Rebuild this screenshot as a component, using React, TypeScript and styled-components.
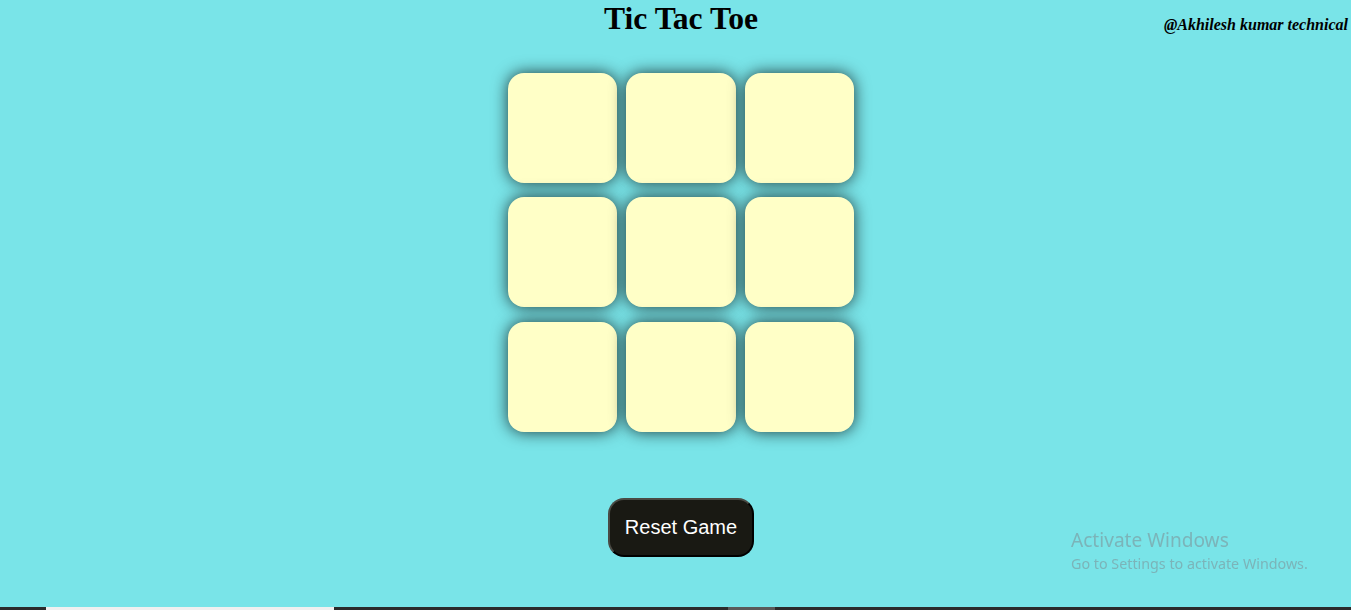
import React from "react";
import styled, { createGlobalStyle } from "styled-components";

const Global = createGlobalStyle`
  html, body { margin: 0; padding: 0; }
  body {
    background: #79e4e8;
    font-family: "Liberation Serif", "Times New Roman", serif;
    overflow: hidden;
  }
`;

const Page = styled.main`
  min-height: 100vh;
  box-sizing: border-box;
  display: flex;
  flex-direction: column;
  align-items: center;
  padding-left: 11px;
`;

const Header = styled.header`
  width: 100%;
  display: grid;
  grid-template-columns: 1fr auto 1fr;
  align-items: baseline;
  padding-top: 1px;
`;

const Title = styled.h1`
  grid-column: 2;
  margin: 0;
  font-size: 31.6px;
  font-weight: 700;
  color: #000;
`;

const Author = styled.p`
  grid-column: 3;
  justify-self: end;
  margin: 0 3px 0 0;
  position: relative;
  top: 1px;
  font-size: 16px;
  font-weight: 700;
  font-style: italic;
  color: #000;
`;

const Board = styled.div`
  margin-top: 36px;
  display: grid;
  grid-template-columns: repeat(3, 109.8px);
  grid-auto-rows: 109.8px;
  gap: 14.6px 8.8px;
`;

const Cell = styled.button`
  width: 109.8px;
  height: 109.8px;
  border: none;
  border-radius: 16px;
  background: #ffffc7;
  box-shadow: 0 0 1rem rgba(0, 0, 0, 0.75);
  cursor: pointer;
  padding: 0;
`;

const ResetButton = styled.button`
  margin-top: 66px;
  padding: 16px 15px;
  font-family: "Liberation Sans", Arial, sans-serif;
  font-size: 20px;
  color: #fff;
  background: #191913;
  border: 2px outset #4a4a44;
  border-right-color: #050503;
  border-bottom-color: #050503;
  border-radius: 16px;
  cursor: pointer;
`;

const Spacer = styled.div`
  flex: 1;
`;

const Taskbar = styled.div`
  align-self: stretch;
  margin-left: -11px;
  height: 3px;
  background: #2b2b2b;
  display: flex;
`;

const TaskSegment = styled.span<{ $w: number; $color: string; $gap: number }>`
  margin-left: ${(p) => p.$gap}px;
  width: ${(p) => p.$w}px;
  background: ${(p) => p.$color};
`;

const Watermark = styled.div`
  position: fixed;
  left: 1071px;
  top: 529px;
  font-family: "Noto Sans", "Open Sans", sans-serif;
  color: rgba(125, 140, 145, 0.55);
  line-height: 1.2;
`;

const WmTitle = styled.div`
  font-size: 19.1px;
`;

const WmSub = styled.div`
  font-size: 14.3px;
  margin-top: 3px;
`;

export default function App() {
  const cells = Array.from({ length: 9 }, (_, i) => i);
  return (
    <>
      <Global />
      <Page>
        <Header>
          <Title>Tic Tac Toe</Title>
          <Author>@Akhilesh kumar technical</Author>
        </Header>
        <Board>
          {cells.map((i) => (
            <Cell key={i} aria-label={`cell ${i + 1}`} />
          ))}
        </Board>
        <ResetButton>Reset Game</ResetButton>
        <Spacer />
        <Taskbar>
          <TaskSegment $gap={46} $w={288} $color="#f0f0f0" />
          <TaskSegment $gap={394} $w={47} $color="#5a5a5a" />
        </Taskbar>
      </Page>
      <Watermark>
        <WmTitle>Activate Windows</WmTitle>
        <WmSub>Go to Settings to activate Windows.</WmSub>
      </Watermark>
    </>
  );
}
